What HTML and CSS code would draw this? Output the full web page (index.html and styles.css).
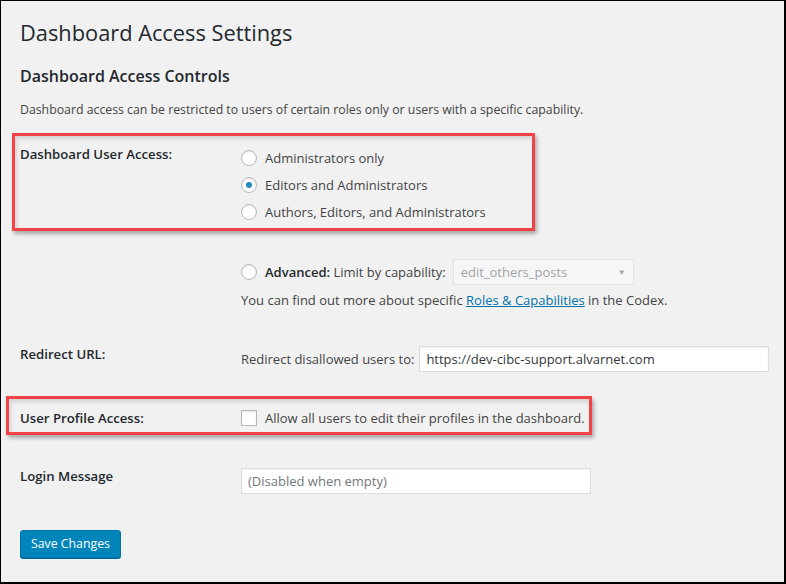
FILE: index.html
```html
<!DOCTYPE html>
<html lang="en">
<head>
  <meta charset="UTF-8" />
  <title>Dashboard Access Settings</title>
  <link rel="stylesheet" href="styles.css">
</head>
<body>
  <div class="wrap">
    <h1>Dashboard Access Settings</h1>
    <h2>Dashboard Access Controls</h2>
    <p class="intro">Dashboard access can be restricted to users of certain roles only or users with a specific capability.</p>

    <div class="row row-access">
      <span class="callout callout-access"></span>
      <div class="row-label">Dashboard User Access:</div>
      <div class="row-field">
        <label class="option"><input type="radio" name="access" /> Administrators only</label>
        <label class="option"><input type="radio" name="access" checked /> Editors and Administrators</label>
        <label class="option"><input type="radio" name="access" /> Authors, Editors, and Administrators</label>
      </div>
    </div>

    <div class="row row-advanced">
      <div class="row-label"></div>
      <div class="row-field">
        <div class="advanced">
          <label class="option"><input type="radio" name="access" /> <span><b>Advanced:</b> Limit by capability:</span></label>
          <div class="select">
            <span>edit_others_posts</span>
            <span class="arrow">&#9660;</span>
          </div>
        </div>
        <p class="note">You can find out more about specific <a href="#">Roles &amp; Capabilities</a> in the Codex.</p>
      </div>
    </div>

    <div class="row row-redirect">
      <div class="row-label">Redirect URL:</div>
      <div class="row-field inline">
        <span>Redirect disallowed users to:</span>
        <input type="text" class="text-input url-input" value="https://dev-cibc-support.alvarnet.com" />
      </div>
    </div>

    <div class="row row-profile">
      <span class="callout callout-profile"></span>
      <div class="row-label">User Profile Access:</div>
      <div class="row-field">
        <label class="option"><input type="checkbox" /> Allow all users to edit their profiles in the dashboard.</label>
      </div>
    </div>

    <div class="row row-login">
      <div class="row-label">Login Message</div>
      <div class="row-field">
        <input type="text" class="text-input login-input" placeholder="(Disabled when empty)" />
      </div>
    </div>

    <button class="button-primary">Save Changes</button>
  </div>
</body>
</html>
```

FILE: styles.css
```css
html, body {
  margin: 0;
  height: 100%;
}
body {
  box-sizing: border-box;
  background: #f1f1f1;
  border-style: solid;
  border-color: #000;
  border-width: 1px 2px 2px 1px;
  font-family: "Open Sans", "Noto Sans", sans-serif;
  font-size: 12.3px;
  line-height: 20px;
  color: #444;
  overflow: hidden;
}
.wrap {
  padding: 17px 0 0 19px;
}
h1 {
  margin: 0;
  font-size: 21.8px;
  font-weight: 400;
  line-height: 29px;
  color: #23282d;
}
h2 {
  margin: 17px 0 0;
  font-size: 16px;
  font-weight: 600;
  line-height: 24px;
  color: #23282d;
}
.intro {
  margin: 12px 0 0;
}

/* form rows */
.row {
  position: relative;
  display: grid;
  grid-template-columns: 221px 1fr;
}
.row-label {
  font-size: 13.2px;
  font-weight: 600;
  color: #23282d;
}
.row-field {
  font-size: 13px;
}
.row-access {
  margin-top: 24px;
}
.row-advanced {
  margin-top: 34px;
}
.row-redirect {
  margin-top: 34px;
}
.row-redirect .row-field,
.row-login .row-field {
  padding-top: 2px;
}
.row-profile {
  margin-top: 36px;
}
.row-login {
  margin-top: 38px;
}

.option {
  display: flex;
  align-items: center;
  height: 27px;
  gap: 8px;
}
.row-profile .option {
  height: 20px;
}
.option b {
  font-weight: 600;
  color: #23282d;
}
input[type="radio"],
input[type="checkbox"] {
  -webkit-appearance: none;
  appearance: none;
  margin: 0;
  width: 16px;
  height: 16px;
  flex: none;
  background: #fff;
  border: 1px solid #b4b9be;
  box-shadow: inset 0 1px 2px rgba(0, 0, 0, 0.1);
  display: grid;
  place-items: center;
}
input[type="radio"] {
  border-radius: 50%;
}
input[type="radio"]:checked::before {
  content: "";
  width: 6px;
  height: 6px;
  border-radius: 50%;
  background: #1e8cbe;
}

.advanced {
  display: flex;
  align-items: center;
  gap: 7px;
  height: 26px;
}
.advanced .option {
  height: 26px;
}
.select {
  box-sizing: border-box;
  width: 181px;
  height: 26px;
  display: flex;
  align-items: center;
  justify-content: space-between;
  padding: 0 7px;
  background: rgba(255, 255, 255, 0.4);
  border: 1px solid #e2e2e2;
  color: #a0a5aa;
}
.select .arrow {
  font-size: 8px;
  color: #a0a5aa;
}
.note {
  margin: 5px 0 0;
}
.note a {
  color: #0073aa;
}

.inline {
  display: flex;
  align-items: flex-start;
  gap: 5px;
}
.inline span {
  line-height: 26px;
}
.text-input {
  box-sizing: border-box;
  height: 26px;
  margin: 0;
  padding: 0 6px;
  font: inherit;
  color: #32373c;
  background: #fff;
  border: 1px solid #ddd;
  box-shadow: inset 0 1px 2px rgba(0, 0, 0, 0.07);
  outline: none;
}
.text-input::placeholder {
  color: #72777c;
}
.url-input {
  width: 350px;
}
.login-input {
  width: 350px;
}

.button-primary {
  margin-top: 36px;
  height: 28px;
  padding: 0 10px 1px;
  font: inherit;
  color: #fff;
  background: #0085ba;
  border: 1px solid #0073aa;
  border-radius: 3px;
  box-shadow: 0 1px 0 #006799;
  cursor: pointer;
}

/* red annotation frames */
.callout {
  position: absolute;
  border: 3px solid #f44346;
  box-shadow: 2px 3px 4px rgba(0, 0, 0, 0.3), inset 2px 3px 4px rgba(0, 0, 0, 0.12);
  pointer-events: none;
}
.callout-access {
  left: -8px;
  top: -11px;
  width: 517px;
  height: 92px;
}
.callout-profile {
  left: -14px;
  top: -12px;
  width: 580px;
  height: 33px;
}
```
